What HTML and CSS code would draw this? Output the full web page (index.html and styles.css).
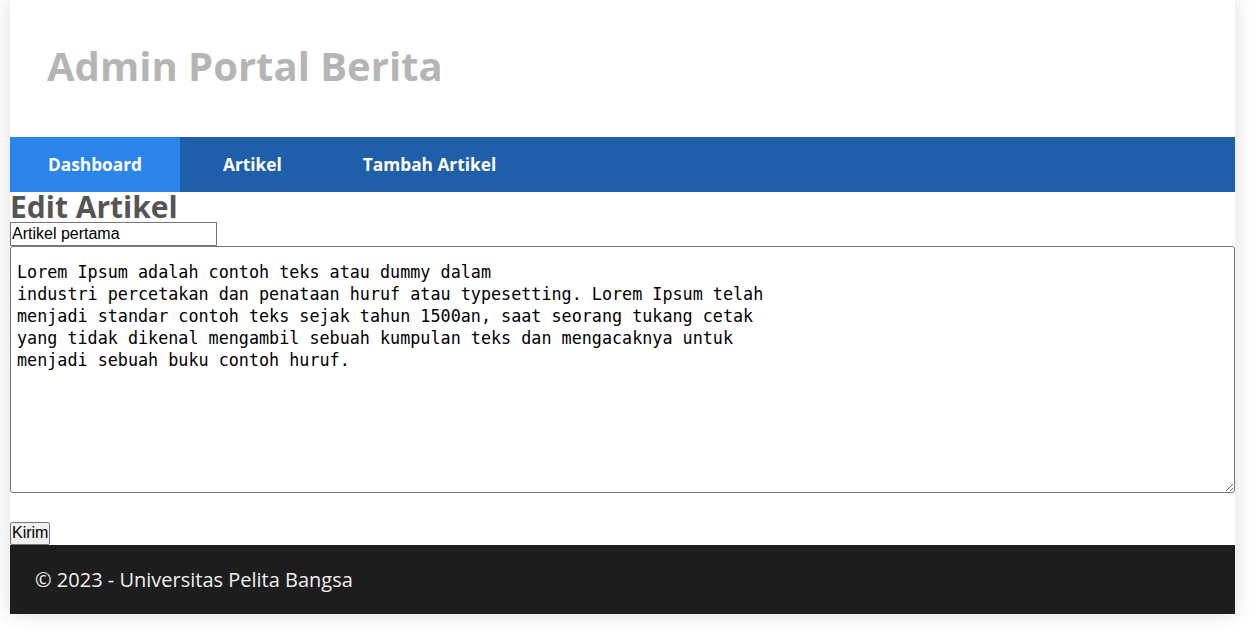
FILE: index.html
```html
<!DOCTYPE html>
<html lang="id">
<head>
<meta charset="utf-8">
<title>Admin Portal Berita</title>
<link rel="stylesheet" href="styles.css">
</head>
<body>
<div class="container">
  <header class="header">
    <h1 class="brand">Admin Portal Berita</h1>
  </header>
  <nav class="nav">
    <a class="nav-item active" href="#">Dashboard</a>
    <a class="nav-item" href="#">Artikel</a>
    <a class="nav-item" href="#">Tambah Artikel</a>
  </nav>
  <main class="content">
    <h2 class="page-title">Edit Artikel</h2>
    <form class="form">
      <input class="title-input" type="text" value="Artikel pertama">
      <textarea class="body-input">
Lorem Ipsum adalah contoh teks atau dummy dalam
industri percetakan dan penataan huruf atau typesetting. Lorem Ipsum telah
menjadi standar contoh teks sejak tahun 1500an, saat seorang tukang cetak
yang tidak dikenal mengambil sebuah kumpulan teks dan mengacaknya untuk
menjadi sebuah buku contoh huruf.</textarea>
      <div class="actions"><button class="submit" type="button">Kirim</button></div>
    </form>
  </main>
  <footer class="footer">© 2023 - Universitas Pelita Bangsa</footer>
</div>
</body>
</html>
```
FILE: styles.css
```css
html, body {
  margin: 0;
  padding: 0;
  background: #ffffff;
}
body {
  font-family: "Open Sans", sans-serif;
  padding-bottom: 17px;
}
.container {
  width: 1225px;
  margin-left: 10px;
  background: #ffffff;
  box-shadow: 0 0 18px rgba(0, 0, 0, 0.14);
}
.header {
  height: 137px;
  display: flex;
  align-items: center;
  padding-left: 37px;
  padding-bottom: 7px;
  box-sizing: border-box;
}
.brand {
  margin: 0;
  font-family: "Open Sans", sans-serif;
  font-weight: 700;
  font-size: 40px;
  color: #b5b5b5;
}
.nav {
  display: flex;
  background: #1f5faa;
  height: 55px;
}
.nav-item {
  display: flex;
  align-items: center;
  padding: 0 38px 1px;
  margin-right: 5px;
  color: #ffffff;
  font-weight: 700;
  font-size: 17.3px;
  text-decoration: none;
}
.nav-item.active {
  background: #2b84ea;
}
.content {
  display: flex;
  flex-direction: column;
}
.page-title {
  margin: 0;
  font-size: 30px;
  line-height: 30px;
  font-weight: 700;
  color: #555555;
}
.form {
  display: flex;
  flex-direction: column;
  align-items: flex-start;
}
.title-input {
  width: 207px;
  height: 24px;
  box-sizing: border-box;
  margin: 0;
  padding: 0 1px;
  font-family: "Liberation Sans", Arial, sans-serif;
  font-size: 16px;
  color: #000;
  border: 1px solid #767676;
  border-radius: 0;
}
.body-input {
  width: 1225px;
  height: 247px;
  box-sizing: border-box;
  margin: 0;
  padding: 14px 6px 4px;
  font-family: "DejaVu Sans Mono", monospace;
  font-size: 16.75px;
  line-height: 22px;
  color: #000;
  border: 1px solid #767676;
  border-radius: 3px;
  resize: both;
}
.actions {
  padding-top: 28px;
}
.submit {
  margin: 0;
  height: 23px;
  padding: 0 1px;
  font-family: "Liberation Sans", Arial, sans-serif;
  font-size: 16px;
  color: #000;
  background: #efefef;
  border: 1px solid #767676;
  border-radius: 2px;
}
.footer {
  background: #1d1d1d;
  color: #f0f0f0;
  font-size: 20px;
  height: 69px;
  display: flex;
  align-items: center;
  padding-left: 25px;
}
```
